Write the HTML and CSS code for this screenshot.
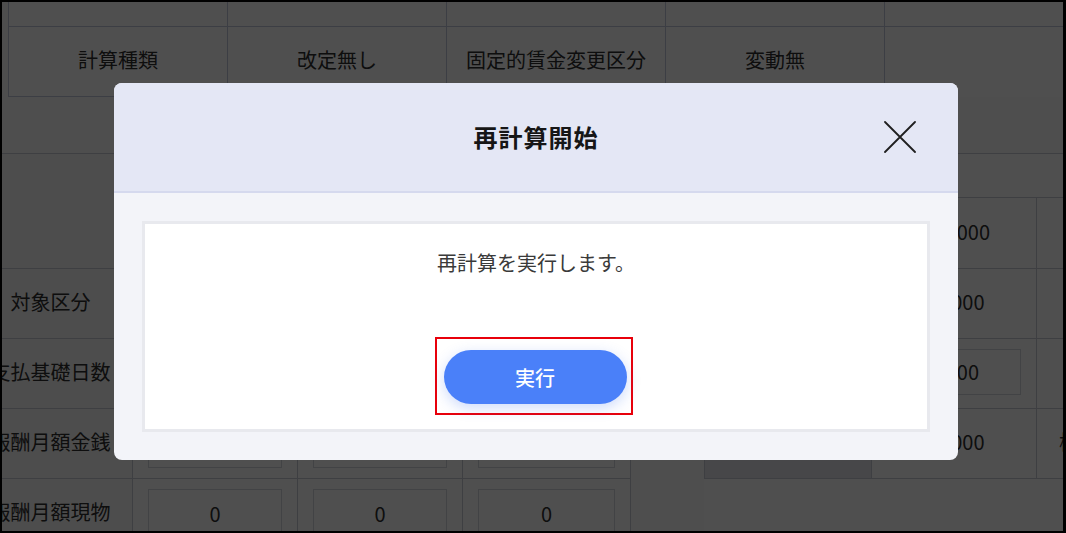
FILE: index.html
```html
<!DOCTYPE html>
<html lang="ja">
<head>
<meta charset="utf-8">
<title>再計算開始</title>
<link rel="stylesheet" href="styles.css">
</head>
<body>
<div class="frame">
  <div class="page">
    <div class="top-table">
      <div class="tc"></div>
      <div class="tc"></div>
      <div class="tc"></div>
      <div class="tc"></div>
      <div class="tc tc-last"></div>
      <div class="tc">計算種類</div>
      <div class="tc">改定無し</div>
      <div class="tc">固定的賃金変更区分</div>
      <div class="tc">変動無</div>
      <div class="tc tc-last tc-open"></div>
    </div>

    <div class="lower">
      <div class="left-table">
        <div class="lc label"></div>
        <div class="lc"></div>
        <div class="lc"></div>
        <div class="lc"></div>

        <div class="lc label">対象区分</div>
        <div class="lc"><div class="field"></div></div>
        <div class="lc"><div class="field"></div></div>
        <div class="lc"><div class="field"></div></div>

        <div class="lc label">支払基礎日数</div>
        <div class="lc"><div class="field">0</div></div>
        <div class="lc"><div class="field">0</div></div>
        <div class="lc"><div class="field">0</div></div>

        <div class="lc label">報酬月額金銭</div>
        <div class="lc"><div class="field"></div></div>
        <div class="lc"><div class="field"></div></div>
        <div class="lc"><div class="field"></div></div>

        <div class="lc label">報酬月額現物</div>
        <div class="lc"><div class="field">0</div></div>
        <div class="lc"><div class="field">0</div></div>
        <div class="lc"><div class="field">0</div></div>
      </div>

      <div class="right-table">
        <div class="rc rc-head"></div>

        <div class="rc rc-first"></div>
        <div class="rc">300,000</div>
        <div class="rc"></div>

        <div class="rc rc-first"></div>
        <div class="rc">30,000</div>
        <div class="rc"></div>

        <div class="rc rc-first"></div>
        <div class="rc"><div class="field">1,000</div></div>
        <div class="rc"></div>

        <div class="rc rc-first rc-muted"></div>
        <div class="rc">30,000</div>
        <div class="rc">標準報酬月額</div>
      </div>
    </div>
  </div>

  <div class="overlay"></div>

  <section class="modal" role="dialog" aria-labelledby="modal-title">
    <header class="modal-header">
      <h2 class="modal-title" id="modal-title">再計算開始</h2>
      <button class="modal-close" type="button" aria-label="閉じる">
        <svg width="32" height="32" viewBox="0 0 32 32" aria-hidden="true">
          <path d="M1 1 L31 31 M31 1 L1 31" stroke="#1f1f1f" stroke-width="1.8" fill="none" stroke-linecap="round"/>
        </svg>
      </button>
    </header>
    <div class="modal-body">
      <div class="modal-panel">
        <p class="modal-message">再計算を実行します。</p>
        <div class="highlight">
          <button class="btn-primary" type="button">実行</button>
        </div>
      </div>
    </div>
  </section>
</div>
</body>
</html>
```

FILE: styles.css
```css
* {
  box-sizing: border-box;
}

html,
body {
  margin: 0;
  padding: 0;
}

body {
  background: #000;
  font-family: "Noto Sans CJK JP", "Noto Sans", sans-serif;
}

.frame {
  position: relative;
  width: 1066px;
  height: 533px;
  border-style: solid;
  border-color: #000;
  border-width: 2px 3px 2px 2px;
  overflow: hidden;
  background: #fbfbfb;
}

.page {
  width: 1061px;
  height: 529px;
  overflow: hidden;
  color: #2e2e2e;
  font-size: 20px;
  line-height: 24px;
}

/* ---------- top table ---------- */
.top-table {
  display: grid;
  grid-template-columns: 219px 219px 219px 219px 1fr;
  grid-template-rows: 25px 70px;
  margin-left: 6px;
  border-left: 1px solid #c3c8da;
  background: #fff;
}

.tc {
  display: flex;
  align-items: center;
  justify-content: center;
  padding-bottom: 4px;
  border-right: 1px solid #c3c8da;
  border-bottom: 1px solid #c3c8da;
  white-space: nowrap;
}

.tc-last {
  border-right: none;
}

.tc-open {
  border-bottom: none;
}

/* ---------- lower section ---------- */
.lower {
  display: flex;
  margin-top: 56px;
  border-top: 1px solid #c8ccd6;
}

.left-table {
  display: grid;
  grid-template-columns: 164px 165px 165px 168px;
  grid-template-rows: 115px 70px 70px 70px 70px;
  flex: none;
  margin-left: -33px;
  background: #fff;
}

.lc {
  display: flex;
  align-items: center;
  justify-content: center;
  border-right: 1px solid #c8ccd6;
  border-bottom: 1px solid #c8ccd6;
  white-space: nowrap;
  overflow: visible;
}

.label {
  padding-bottom: 3px;
  background: #f7f7f7;
}

.field {
  flex: 1;
  align-self: stretch;
  display: flex;
  align-items: center;
  justify-content: center;
  margin: 10px 15px;
  border: 1px solid #d6d8de;
  background: #fff;
}

.right-table {
  display: grid;
  grid-template-columns: 168px 165px 165px;
  grid-template-rows: 44px 71px 70px 70px 70px;
  flex: none;
  margin-left: 73px;
  background: #fff;
}

.rc {
  display: flex;
  align-items: center;
  justify-content: center;
  border-right: 1px solid #c8ccd6;
  border-bottom: 1px solid #c8ccd6;
  white-space: nowrap;
  padding-bottom: 3px;
}

.rc .field {
  margin: 10px 15px 10px 15px;
}

.rc-head {
  grid-column: 1 / 4;
  border-right: none;
}

.rc-first {
  border-left: 1px solid #c8ccd6;
}

.rc-muted {
  background: #e4e6ec;
}

/* ---------- overlay + modal ---------- */
.overlay {
  position: absolute;
  inset: 0;
  background: rgba(0, 0, 0, 0.69);
  z-index: 1;
}

.modal {
  position: absolute;
  left: 112px;
  top: 81px;
  width: 844px;
  z-index: 2;
  border-radius: 8px;
  overflow: hidden;
  background: #f3f4f9;
}

.modal-header {
  display: grid;
  grid-template-columns: 1fr auto 1fr;
  align-items: center;
  height: 110px;
  background: #e4e7f5;
  border-bottom: 2px solid #d5d9ee;
}

.modal-title {
  grid-column: 2;
  margin: 0;
  font-size: 24px;
  line-height: 30px;
  letter-spacing: 1px;
  font-weight: 700;
  color: #161616;
}

.modal-close {
  grid-column: 3;
  justify-self: end;
  width: 32px;
  height: 32px;
  margin-right: 42px;
  padding: 0;
  border: none;
  background: transparent;
  display: block;
}

.modal-close svg {
  display: block;
}

.modal-body {
  padding: 28px;
}

.modal-panel {
  display: flex;
  flex-direction: column;
  align-items: center;
  background: #fff;
  border: 3px solid #e8e9ee;
  padding: 27px 0 14px;
}

.modal-message {
  margin: 0;
  font-size: 20px;
  line-height: 24px;
  color: #3a3a3a;
}

.highlight {
  margin-top: 62px;
  margin-right: 5px;
  border: 2px solid #e8000b;
  padding: 11px 4px 9px 7px;
}

.btn-primary {
  display: block;
  width: 183px;
  height: 54px;
  border: none;
  border-radius: 27px;
  background: #4a80f9;
  color: #fff;
  font-family: "Noto Sans CJK JP", "Noto Sans", sans-serif;
  font-size: 20px;
  font-weight: 500;
  box-shadow: 0 4px 14px rgba(60, 110, 240, 0.25);
}
```
